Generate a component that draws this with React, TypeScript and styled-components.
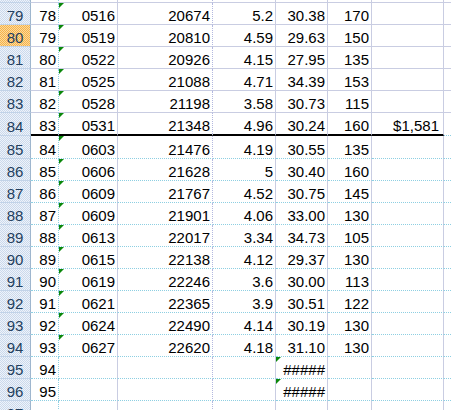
import React from "react";
import styled, { createGlobalStyle, css } from "styled-components";

const GlobalStyle = createGlobalStyle`
  html, body { margin: 0; padding: 0; background: #fff; overflow: hidden; }
  body { font-family: "Liberation Sans", Arial, sans-serif; }
`;

const SOLID = "#c9cde2";
const DOT_LAV = "#b3b8df";
const DOT_CYAN = "#8ecfe2";
const HEAD_RIGHT = "#9eb6ce";
const HEAD_BOTTOM = "#c2d3e8";

type Bottom = "solid" | "dotted" | "thick";
type Right = "dc" | "sl" | "dl" | "none";

const COLS = "31px 28px 59px 95px 63px 52px 44px 72px 1fr";
const RIGHTS: Right[] = ["dc", "sl", "dl", "sl", "sl", "sl", "sl", "none"];

const Sheet = styled.div`
  width: 451px;
  height: 410px;
  overflow: hidden;
  display: flex;
  flex-direction: column;
  font-size: 15px;
  color: #000;
`;

const Row = styled.div<{ $h: number }>`
  display: grid;
  grid-template-columns: ${COLS};
  height: ${(p) => p.$h}px;
  flex: 0 0 auto;
`;

const cellText = css`
  box-sizing: border-box;
  display: flex;
  align-items: flex-end;
  line-height: 15px;
  padding-bottom: 1px;
  white-space: nowrap;
  overflow: hidden;
`;

const HeaderCell = styled.div<{ $selected?: boolean }>`
  ${cellText};
  justify-content: center;
  color: #233f5e;
  border-right: 1px solid ${HEAD_RIGHT};
  border-bottom: 1px solid ${HEAD_BOTTOM};
  background-image: ${(p) =>
    p.$selected
      ? "conic-gradient(#f5b24a 25%, #fcd99c 0 50%, #f5b24a 0 75%, #fcd99c 0)"
      : "conic-gradient(#cbd9ec 25%, #eef3fa 0 50%, #cbd9ec 0 75%, #eef3fa 0)"};
  background-size: 2px 2px;
`;

const rightBorder = (r: Right) => {
  switch (r) {
    case "dc":
      return `border-right: 1px dotted ${DOT_CYAN};`;
    case "sl":
      return `border-right: 1px solid ${SOLID};`;
    case "dl":
      return `border-right: 1px dotted ${DOT_LAV};`;
    default:
      return "";
  }
};

const bottomBorder = (b: Bottom) => {
  switch (b) {
    case "solid":
      return `border-bottom: 1px solid ${SOLID};`;
    case "dotted":
      return `border-bottom: 1px dotted ${DOT_CYAN};`;
    case "thick":
      return `border-bottom: 2px solid #000;`;
  }
};

const Cell = styled.div<{
  $right: Right;
  $bottom: Bottom;
  $tri?: boolean;
  $extraPad?: boolean;
}>`
  ${cellText};
  position: relative;
  justify-content: flex-end;
  padding-right: ${(p) => (p.$extraPad ? 4 : 2)}px;
  ${(p) => rightBorder(p.$right)}
  ${(p) => bottomBorder(p.$bottom)}
  ${(p) =>
    p.$tri &&
    css`
      &::before {
        content: "";
        position: absolute;
        top: 0;
        left: 0;
        width: 0;
        height: 0;
        border-top: 5px solid #0a870a;
        border-right: 5px solid transparent;
      }
    `}
`;

type RowData = {
  n: number;
  h: number;
  bottom: Bottom;
  cells: string[];
  triC?: boolean;
  triF?: boolean;
};

const raw: [string, string, string, string, string, string, string][] = [
  ["78", "0516", "20674", "5.2", "30.38", "170", ""],
  ["79", "0519", "20810", "4.59", "29.63", "150", ""],
  ["80", "0522", "20926", "4.15", "27.95", "135", ""],
  ["81", "0525", "21088", "4.71", "34.39", "153", ""],
  ["82", "0528", "21198", "3.58", "30.73", "115", ""],
  ["83", "0531", "21348", "4.96", "30.24", "160", "$1,581"],
  ["84", "0603", "21476", "4.19", "30.55", "135", ""],
  ["85", "0606", "21628", "5", "30.40", "160", ""],
  ["86", "0609", "21767", "4.52", "30.75", "145", ""],
  ["87", "0609", "21901", "4.06", "33.00", "130", ""],
  ["88", "0613", "22017", "3.34", "34.73", "105", ""],
  ["89", "0615", "22138", "4.12", "29.37", "130", ""],
  ["90", "0619", "22246", "3.6", "30.00", "113", ""],
  ["91", "0621", "22365", "3.9", "30.51", "122", ""],
  ["92", "0624", "22490", "4.14", "30.19", "130", ""],
  ["93", "0627", "22620", "4.18", "31.10", "130", ""],
  ["94", "", "", "", "#####", "", ""],
  ["95", "", "", "", "#####", "", ""],
];

const rows: RowData[] = [
  { n: 78, h: 3, bottom: "solid", cells: ["", "", "", "", "", "", "", ""] },
  ...raw.map((r, i) => {
    const n = 79 + i;
    let h = 22;
    let bottom: Bottom = "dotted";
    if (n <= 83) bottom = "solid";
    if (n === 84) {
      bottom = "thick";
      h = 23;
    }
    if (n === 85) h = 23;
    return {
      n,
      h,
      bottom,
      cells: [...r, ""],
      triC: n <= 94,
      triF: n >= 95,
    } as RowData;
  }),
  { n: 97, h: 22, bottom: "dotted", cells: ["", "", "", "", "", "", "", ""] },
];

export default function App() {
  return (
    <>
      <GlobalStyle />
      <Sheet>
        {rows.map((row) => (
          <Row key={row.n} $h={row.h}>
            <HeaderCell $selected={row.n === 80}>
              {row.n === 78 ? "" : row.n}
            </HeaderCell>
            {row.cells.map((c, ci) => {
              const isI = ci === 7;
              const bottom: Bottom =
                row.bottom === "thick" && isI ? "dotted" : row.bottom;
              return (
                <Cell
                  key={ci}
                  $right={RIGHTS[ci]}
                  $bottom={bottom}
                  $tri={(ci === 1 && row.triC) || (ci === 4 && row.triF)}
                  $extraPad={ci === 6}
                >
                  {c}
                </Cell>
              );
            })}
          </Row>
        ))}
      </Sheet>
    </>
  );
}
